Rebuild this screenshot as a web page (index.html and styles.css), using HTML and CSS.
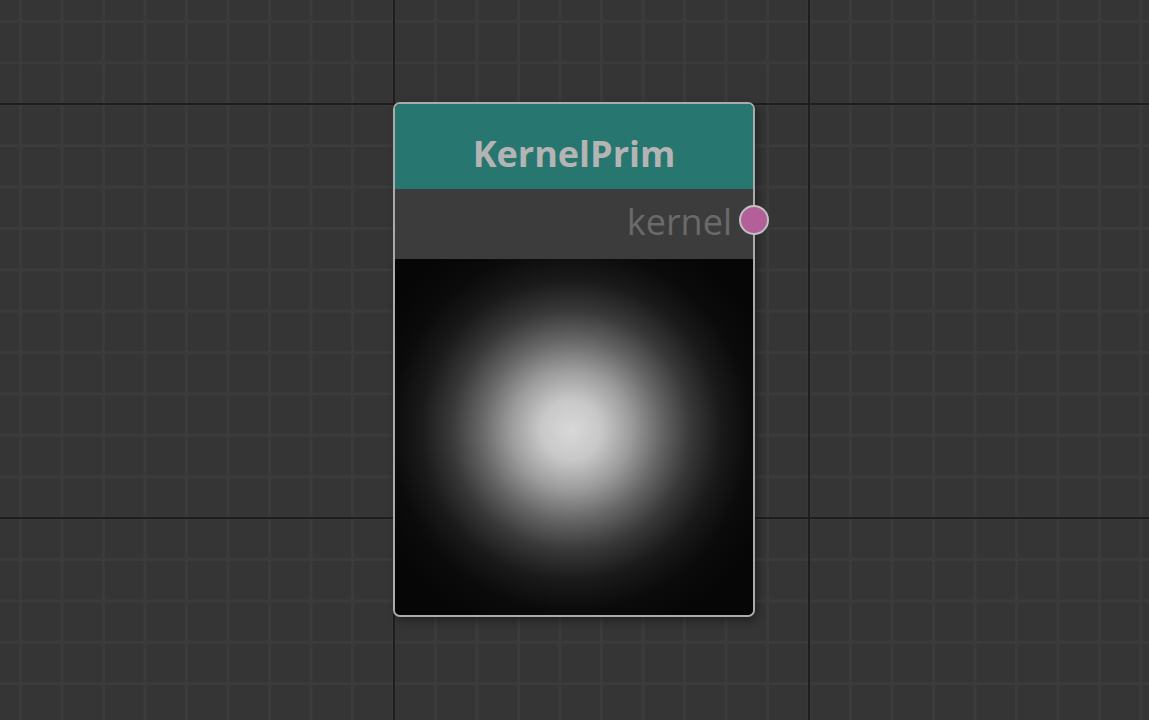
FILE: index.html
```html
<!DOCTYPE html>
<html>
<head>
<meta charset="utf-8">
<link rel="stylesheet" href="styles.css">
</head>
<body>
<div class="canvas">
  <div class="node">
    <div class="node-header">KernelPrim</div>
    <div class="node-row">
      <span class="port-label">kernel</span>
      <span class="pin"></span>
    </div>
    <div class="preview"></div>
  </div>
</div>
</body>
</html>
```

FILE: styles.css
```css
html, body {
  margin: 0;
  padding: 0;
  width: 1149px;
  height: 720px;
  overflow: hidden;
}
.canvas {
  position: relative;
  width: 1149px;
  height: 720px;
  background-color: #353535;
  background-image:
    linear-gradient(to right, #1e1e1e 0, #1e1e1e 2px, transparent 2px),
    linear-gradient(to bottom, #1e1e1e 0, #1e1e1e 2px, transparent 2px),
    linear-gradient(to right, #3b3b3b 0, #3b3b3b 3px, transparent 3px),
    linear-gradient(to bottom, #3b3b3b 0, #3b3b3b 3px, transparent 3px);
  background-size: 415px 415px, 415px 414px, 41.5px 41.5px, 41.5px 41.4px;
  background-position: 393px 0, 0 103px, 19px 0, 0 20px;
  font-family: "Open Sans", "Noto Sans", sans-serif;
}
.node {
  position: absolute;
  left: 393px;
  top: 102px;
  width: 358px;
  border: 2px solid #ababab;
  border-radius: 7px;
  display: flex;
  flex-direction: column;
  box-shadow: 3px 4px 8px rgba(0,0,0,0.35);
}
.node-header {
  height: 85px;
  background: #277770;
  border-radius: 5px 5px 0 0;
  color: #b4b4b4;
  font-weight: 700;
  font-size: 36px;
  display: flex;
  align-items: center;
  justify-content: center;
  padding-top: 13px;
  box-sizing: border-box;
}
.node-row {
  height: 70px;
  background: #3c3c3c;
  display: flex;
  align-items: center;
  justify-content: flex-end;
  position: relative;
}
.port-label {
  color: #6a6a6a;
  font-size: 36px;
  margin-right: 21px;
  margin-top: -6px;
}
.pin {
  position: absolute;
  right: -16px;
  top: 16px;
  width: 26px;
  height: 26px;
  border-radius: 50%;
  background: #b3609a;
  border: 2px solid #c2c2c2;
}
.preview {
  height: 356px;
  border-radius: 0 0 5px 5px;
  background: radial-gradient(circle at 176px 171px,
    #d8d8d8 0,
    #c8c8c8 30px,
    #9c9c9c 60px,
    #666666 90px,
    #383838 120px,
    #1a1a1a 150px,
    #0b0b0b 180px,
    #060606 215px);
}
```
